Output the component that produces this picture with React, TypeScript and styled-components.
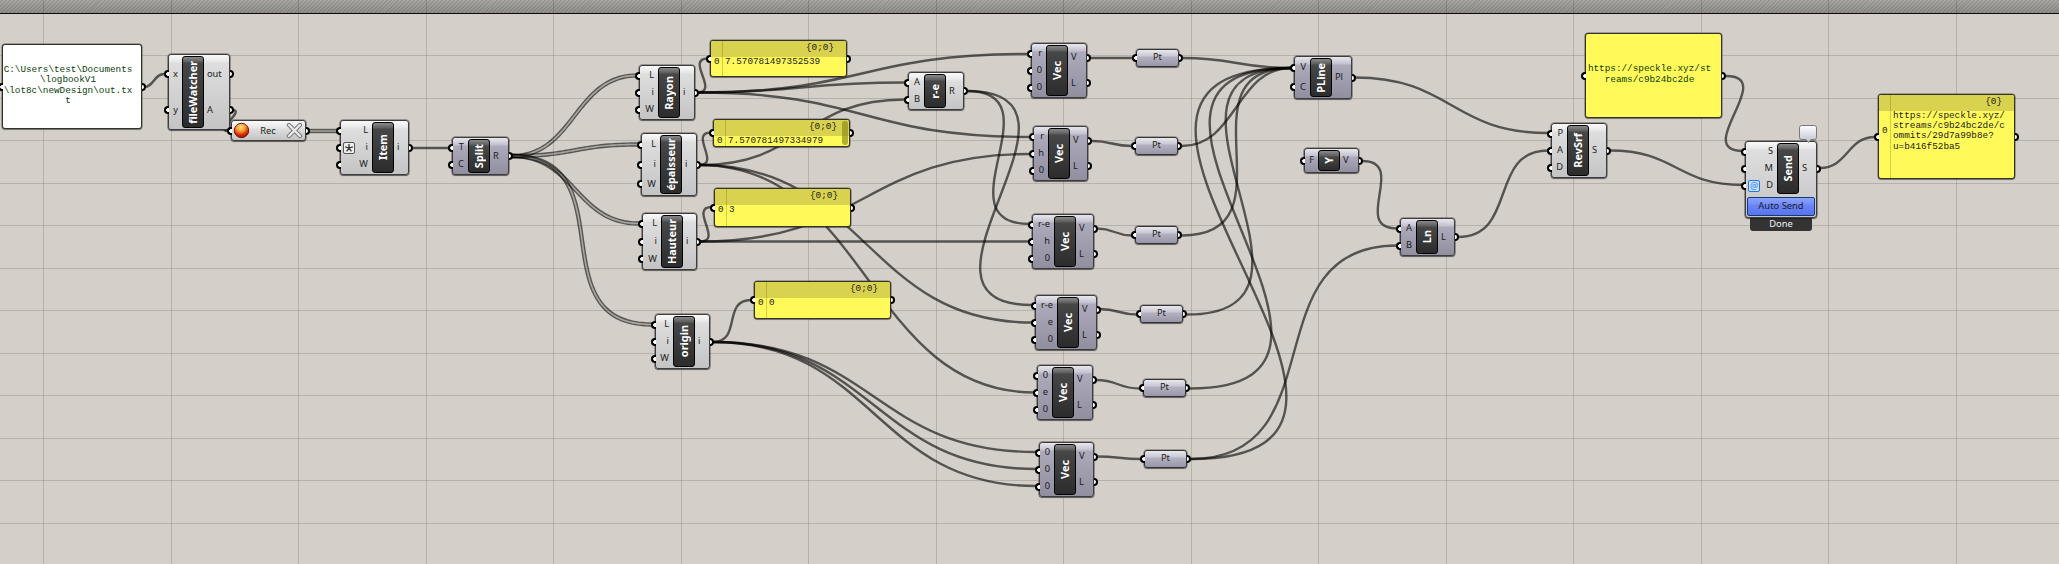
import React from "react";
import styled, { createGlobalStyle, css } from "styled-components";

const GlobalStyle = createGlobalStyle`
  * { box-sizing: border-box; }
  html, body { margin: 0; padding: 0; overflow: hidden; }
`;

const WIDTH = 2059;
const HEIGHT = 564;

const Window = styled.div`
  position: relative;
  display: flex;
  flex-direction: column;
  width: ${WIDTH}px;
  height: ${HEIGHT}px;
  overflow: hidden;
  background: #d4cfc8;
  font-family: "Noto Sans", "Open Sans", sans-serif;
  color: #1c1c1c;
`;

const TopBar = styled.div`
  flex: none;
  height: 14px;
  border-bottom: 1px solid #0a0a0a;
  background:
    repeating-linear-gradient(135deg, rgba(255, 255, 255, 0.06) 0 1.4px, rgba(0, 0, 0, 0.05) 1.4px 2.8px),
    linear-gradient(#a3a29d, #898884);
`;

const Canvas = styled.svg`
  position: absolute;
  inset: 0;
`;

type Box = { $x: number; $y: number; $w: number; $h: number };

const placed = css<Box>`
  position: absolute;
  left: ${(p) => p.$x}px;
  top: ${(p) => p.$y}px;
  width: ${(p) => p.$w}px;
  height: ${(p) => p.$h}px;
`;

type Tone = "light" | "purple";

const tones: Record<Tone, string> = {
  light: "linear-gradient(#fafafa 0, #e6e6e6 7px, #dedede 8px, #c4c4c4 100%)",
  purple: "linear-gradient(#e9e8ee 0, #c3c1ce 7px, #adabbb 8px, #908e9f 100%)",
};

const NodeFrame = styled.div<Box & { $tone: Tone }>`
  ${placed}
  display: flex;
  flex-direction: column;
  border: 1px solid #3d3d3f;
  border-radius: 3px;
  background: ${(p) => tones[p.$tone]};
  box-shadow: 0 0 0 0.5px rgba(40, 40, 40, 0.7), 0 1px 1px rgba(0, 0, 0, 0.4);
`;

const NodeBody = styled.div<{ $left: number }>`
  flex: 1;
  min-height: 0;
  display: grid;
  grid-template-columns: ${(p) => p.$left - 1}px 22px 1fr;
  padding: 1px 0;
`;

const Ports = styled.div`
  display: flex;
  flex-direction: column;
`;

const Socket = styled.i<{ $side: "left" | "right" }>`
  position: absolute;
  ${(p) => p.$side}: -5px;
  top: calc(50% - 4px);
  width: 4.5px;
  height: 8px;
  border: 2px solid #000;
  background: #fff;
  ${(p) =>
    p.$side === "left"
      ? "border-right: 0; border-radius: 4px 0 0 4px;"
      : "border-left: 0; border-radius: 0 4px 4px 0;"}
`;

const PortRow = styled.div<{ $side: "left" | "right" }>`
  position: relative;
  flex: 1;
  display: flex;
  align-items: center;
  justify-content: ${(p) => (p.$side === "left" ? "flex-end" : "flex-start")};
  padding: ${(p) => (p.$side === "left" ? "0 4px 1px 0" : "0 0 1px 3px")};
  font-size: 9.3px;
  line-height: 10px;
  white-space: nowrap;
`;

const NamePlate = styled.div`
  display: flex;
  align-items: center;
  justify-content: center;
  overflow: hidden;
  border: 1px solid #000;
  border-radius: 3px;
  background: linear-gradient(#8a8a8a 0, #5c5c5c 5px, #474747 6px, #2c2c2c 100%);
  color: #fff;
`;

const NameText = styled.span`
  writing-mode: vertical-rl;
  transform: rotate(180deg);
  font-size: 10.9px;
  font-weight: 700;
  line-height: 20px;
  white-space: nowrap;
`;

const Param = styled.div<Box>`
  ${placed}
  display: flex;
  align-items: center;
  justify-content: center;
  border: 1px solid #333336;
  border-radius: 3px;
  background: linear-gradient(#e9e8ee 0, #c9c7d3 6px, #b4b2c1 7px, #9896a7 100%);
  box-shadow: 0 0 0 0.5px rgba(40, 40, 40, 0.6), 0 1px 1px rgba(0, 0, 0, 0.4);
  font-size: 9.3px;
  line-height: 10px;
  padding-bottom: 2px;
`;

const Recorder = styled.div<Box>`
  ${placed}
  display: flex;
  align-items: center;
  justify-content: space-between;
  padding: 0 2px 0 1px;
  border: 1px solid #3d3d3f;
  border-radius: 3px;
  background: ${tones.light};
  box-shadow: 0 0 0 0.5px rgba(40, 40, 40, 0.7), 0 1px 1px rgba(0, 0, 0, 0.4);
  font-size: 9.3px;
`;

const Modifier = styled.span<{ $blue?: boolean }>`
  position: absolute;
  left: 2px;
  top: calc(50% - 6px);
  width: 12px;
  height: 12px;
  border: 1px solid ${(p) => (p.$blue ? "#1b78f0" : "#555")};
  border-radius: 2px;
  background: ${(p) => (p.$blue ? "#cfe0fa" : "#eee")};
  svg { display: block; }
  color: ${(p) => (p.$blue ? "#2a7ff0" : "#333")};
  font-size: 9px;
  line-height: 9px;
  text-align: center;
`;

const AutoButton = styled.div`
  flex: none;
  height: 19px;
  margin: 2px 1px 1px;
  border: 1px solid #123c78;
  border-radius: 2px;
  background: linear-gradient(#8aa2fb 0, #7690fa 6px, #6a85f8 7px, #5973f0 100%);
  text-align: center;
  font-size: 9.4px;
  line-height: 16px;
`;

const StatusTab = styled.div<Box>`
  ${placed}
  border-radius: 0 0 3px 3px;
  background: #333;
  color: #f2f2f2;
  text-align: center;
  font-size: 9.4px;
  line-height: 13px;
`;

const PanelFrame = styled.div<Box & { $white?: boolean }>`
  ${placed}
  display: flex;
  flex-direction: column;
  border: 1px solid #33332a;
  border-radius: 3px;
  background: ${(p) => (p.$white ? "#fff" : "#fffa5a")};
  box-shadow: 0 0 0 0.5px rgba(40, 40, 30, 0.6), 0 1px 1px rgba(0, 0, 0, 0.3);
  font-family: "Liberation Mono", "DejaVu Sans Mono", monospace;
  font-size: 9.34px;
  line-height: 10.2px;
`;

const PanelHeader = styled.div`
  flex: none;
  height: 16px;
  padding: 2px 12px 0 0;
  background: #d8d24e;
  border-radius: 2px 2px 0 0;
  text-align: right;
`;

const PanelRow = styled.div`
  display: grid;
  grid-template-columns: 12px 1fr;
  align-items: center;
  white-space: pre;
  span:first-child { padding-left: 3px; }
  span:last-child { padding-left: 2px; }
`;

const PanelRule = styled.i`
  position: absolute;
  left: 11px;
  top: 0;
  bottom: 0;
  width: 1px;
  background: rgba(100, 95, 0, 0.28);
`;

const PanelScroll = styled.i`
  position: absolute;
  right: 1px;
  top: 1px;
  width: 6px;
  height: 24px;
  border-radius: 3px;
  background: rgba(140, 135, 20, 0.65);
`;

const PanelNote = styled.div`
  flex: 1;
  display: flex;
  align-items: center;
  justify-content: center;
  padding: 0 8px 2px 0;
  white-space: pre;
  text-align: center;
  color: #0a3d0a;
`;

type NodeSpec = {
  x: number; y: number; w: number; h: number; left: number;
  tone: Tone; name: string; ins: string[]; outs: string[]; star?: number;
};

const nodes: NodeSpec[] = [
  { x: 168, y: 54, w: 62, h: 76, left: 14, tone: "light", name: "fileWatcher", ins: ["x", "y"], outs: ["out", "A"] },
  { x: 340, y: 120, w: 69, h: 55, left: 32, tone: "light", name: "Item", ins: ["L", "i", "W"], outs: ["i"], star: 1 },
  { x: 452, y: 137, w: 57, h: 38, left: 16, tone: "purple", name: "Split", ins: ["T", "C"], outs: ["R"] },
  { x: 639, y: 65, w: 56, h: 55, left: 19, tone: "light", name: "Rayon", ins: ["L", "i", "W"], outs: ["i"] },
  { x: 641, y: 133, w: 56, h: 63, left: 19, tone: "light", name: "épaisseur", ins: ["L", "i", "W"], outs: ["i"] },
  { x: 642, y: 213, w: 55, h: 57, left: 19, tone: "light", name: "Hauteur", ins: ["L", "i", "W"], outs: ["i"] },
  { x: 655, y: 314, w: 55, h: 55, left: 18, tone: "light", name: "origin", ins: ["L", "i", "W"], outs: ["i"] },
  { x: 908, y: 72, w: 56, h: 38, left: 16, tone: "light", name: "r-e", ins: ["A", "B"], outs: ["R"] },
  { x: 1031, y: 43, w: 56, h: 55, left: 15, tone: "purple", name: "Vec", ins: ["r", "0", "0"], outs: ["V", "L"] },
  { x: 1033, y: 126, w: 55, h: 55, left: 15, tone: "purple", name: "Vec", ins: ["r", "h", "0"], outs: ["V", "L"] },
  { x: 1032, y: 214, w: 62, h: 55, left: 22, tone: "purple", name: "Vec", ins: ["r-e", "h", "0"], outs: ["V", "L"] },
  { x: 1035, y: 295, w: 62, h: 55, left: 22, tone: "purple", name: "Vec", ins: ["r-e", "e", "0"], outs: ["V", "L"] },
  { x: 1037, y: 365, w: 56, h: 55, left: 15, tone: "purple", name: "Vec", ins: ["0", "e", "0"], outs: ["V", "L"] },
  { x: 1039, y: 442, w: 55, h: 55, left: 15, tone: "purple", name: "Vec", ins: ["0", "0", "0"], outs: ["V", "L"] },
  { x: 1294, y: 56, w: 58, h: 43, left: 16, tone: "purple", name: "PLine", ins: ["V", "C"], outs: ["Pl"] },
  { x: 1304, y: 148, w: 55, h: 25, left: 14, tone: "purple", name: "Y", ins: ["F"], outs: ["V"] },
  { x: 1400, y: 218, w: 55, h: 38, left: 16, tone: "purple", name: "Ln", ins: ["A", "B"], outs: ["L"] },
  { x: 1551, y: 123, w: 56, h: 55, left: 16, tone: "light", name: "RevSrf", ins: ["P", "A", "D"], outs: ["S"] },
];

const sendNode: NodeSpec = {
  x: 1745, y: 141, w: 72, h: 77, left: 32, tone: "light", name: "Send", ins: ["S", "M", "D"], outs: ["S"],
};

const params = [
  [1136, 49], [1135, 137], [1135, 226], [1140, 305], [1143, 379], [1144, 450],
];

type WireSpec = [number, number, number, number];

const wires: WireSpec[] = [
  [144, 87, 164, 74],
  [232, 110, 228, 131],
  [412, 148, 449, 148],
  [697, 92.5, 708, 58.5],
  [699, 165, 711, 132.5],
  [700, 241.5, 712, 207],
  [713, 342, 751, 300],
  [698, 92.5, 1028, 54],
  [698, 92.5, 905, 82.5],
  [698, 92.5, 1030, 137],
  [700, 165, 905, 99.5],
  [700, 165, 1032, 322.5],
  [700, 165, 1035, 392.5],
  [700, 241.5, 1030, 154],
  [700, 241.5, 1029, 241.5],
  [713, 342, 1036, 452],
  [713, 342, 1036, 469],
  [713, 342, 1036, 486],
  [967, 91, 1030, 224],
  [967, 91, 1032, 305],
  [1090, 58, 1133, 58],
  [1092, 141, 1132, 146],
  [1097, 228.5, 1132, 235.5],
  [1100, 309, 1137, 314.5],
  [1096, 380, 1140, 388.5],
  [1097, 456.5, 1141, 459],
  [1182, 58, 1291, 68],
  [1182, 146, 1291, 68],
  [1182, 235.5, 1291, 68],
  [1187, 314.5, 1291, 68],
  [1190, 388.5, 1291, 68],
  [1191, 459, 1291, 68],
  [1191, 459, 1397, 245.5],
  [1355, 77.5, 1548, 133],
  [1362, 161, 1397, 228.5],
  [1458, 237, 1548, 150.5],
  [1610, 150.5, 1743, 185],
  [1726, 76, 1743, 151],
  [1820, 168, 1875, 137],
];

const treeWires: WireSpec[] = [
  [309, 131, 337, 131],
  [512, 156, 637, 75.5],
  [512, 156, 638, 144.5],
  [512, 156, 639, 223.5],
  [512, 156, 652, 324.5],
];

function reach([x1, y1, x2, y2]: WireSpec) {
  const dx = Math.abs(x2 - x1);
  const dy = Math.abs(y2 - y1);
  return Math.max(dx * 0.5, dy * (dy > 250 ? 0.725 : 0.69));
}

function wirePath(w: WireSpec) {
  const k = reach(w);
  const [x1, y1, x2, y2] = w;
  return `M${x1} ${y1}C${x1 + k} ${y1} ${x2 - k} ${y2} ${x2} ${y2}`;
}

/* Follows the wire at a constant distance from its centre line. */
function parallelPath(w: WireSpec, offset: number) {
  const [x1, y1, x2, y2] = w;
  const k = reach(w);
  const xs = [x1, x1 + k, x2 - k, x2];
  const ys = [y1, y1, y2, y2];
  const points: string[] = [];
  for (let i = 0; i <= 48; i++) {
    const t = i / 48;
    const u = 1 - t;
    const at = (p: number[]) => u * u * u * p[0] + 3 * u * u * t * p[1] + 3 * u * t * t * p[2] + t * t * t * p[3];
    const slope = (p: number[]) => u * u * (p[1] - p[0]) + 2 * u * t * (p[2] - p[1]) + t * t * (p[3] - p[2]);
    const sx = slope(xs);
    const sy = slope(ys);
    const len = Math.hypot(sx, sy) || 1;
    points.push(`${(at(xs) - (sy / len) * offset).toFixed(2)} ${(at(ys) + (sx / len) * offset).toFixed(2)}`);
  }
  return "M" + points.join("L");
}

const columns = Array.from({ length: 16 }, (_, i) => Math.floor(43.5 + 127.5 * i) + 0.5);
const rows = Array.from({ length: 12 }, (_, i) => Math.floor(55.5 + 42.5 * i) + 0.5);

function Body({ spec }: { spec: NodeSpec }) {
  return (
    <NodeBody $left={spec.left}>
      <Ports>
        {spec.ins.map((label, i) => (
          <PortRow key={i} $side="left">
            <Socket $side="left" />
            {spec.star === i && (
              <Modifier>
                <svg width="10" height="10" viewBox="0 0 10 10" stroke="#333" strokeWidth="1.3">
                  <path d="M5 1V5M5 5L1.2 3.8M5 5L8.8 3.8M5 5L2.6 8.4M5 5L7.4 8.4" />
                </svg>
              </Modifier>
            )}
            {spec.name === "Send" && i === 2 && <Modifier $blue>@</Modifier>}
            {label}
          </PortRow>
        ))}
      </Ports>
      <NamePlate>
        <NameText>{spec.name}</NameText>
      </NamePlate>
      <Ports>
        {spec.outs.map((label, i) => (
          <PortRow key={i} $side="right">
            {label}
            <Socket $side="right" />
          </PortRow>
        ))}
      </Ports>
    </NodeBody>
  );
}

function Node({ spec, children }: { spec: NodeSpec; children?: React.ReactNode }) {
  return (
    <NodeFrame $x={spec.x} $y={spec.y} $w={spec.w} $h={spec.h} $tone={spec.tone}>
      <Body spec={spec} />
      {children}
    </NodeFrame>
  );
}

type PanelProps = {
  x: number; y: number; h: number; w?: number; path?: string; value?: string; note?: string;
  white?: boolean; scroll?: boolean;
};

function Panel({ x, y, h, w = 137, path, value, note, white, scroll }: PanelProps) {
  return (
    <PanelFrame $x={x} $y={y} $w={w} $h={h} $white={white}>
      <Socket $side="left" />
      <Socket $side="right" />
      {path && <PanelHeader>{path}</PanelHeader>}
      {value && (
        <PanelRow>
          <span>0</span>
          <span>{value}</span>
        </PanelRow>
      )}
      {path && <PanelRule />}
      {scroll && <PanelScroll />}
      {note && <PanelNote>{note}</PanelNote>}
    </PanelFrame>
  );
}

export default function App() {
  return (
    <Window>
      <GlobalStyle />
      <TopBar />
      <Canvas width={WIDTH} height={HEIGHT} fill="none">
        <g stroke="#000" strokeOpacity="0.14">
          {columns.map((x) => <path key={x} d={`M${x} 0V${HEIGHT}`} />)}
          {rows.map((y) => <path key={y} d={`M0 ${y}H${WIDTH}`} />)}
        </g>
        <g stroke="#000" strokeOpacity="0.6" strokeWidth="2.4">
          {wires.map((w, i) => <path key={i} d={wirePath(w)} />)}
        </g>
        {treeWires.map((w, i) => (
          <g key={i} stroke="#000">
            <path d={wirePath(w)} strokeOpacity="0.2" strokeWidth="2" />
            <path d={parallelPath(w, 1.5)} strokeOpacity="0.58" strokeWidth="1.4" />
            <path d={parallelPath(w, -1.5)} strokeOpacity="0.58" strokeWidth="1.4" />
          </g>
        ))}
      </Canvas>

      <Panel x={2} y={44} w={140} h={85} white note={"C:\\Users\\test\\Documents\n\\logbookV1\n\\lot8c\\newDesign\\out.tx\nt"} />
      <Panel x={710} y={40} h={37} path="{0;0}" value="7.570781497352539" />
      <Panel x={713} y={119} h={28} path="{0;0}" value="7.570781497334979" scroll />
      <Panel x={714} y={188} h={39} path="{0;0}" value="3" />
      <Panel x={754} y={281} h={38} path="{0;0}" value="0" />
      <Panel x={1585} y={33} h={85} note={"https://speckle.xyz/st\nreams/c9b24bc2de"} />
      <Panel
        x={1878} y={94} h={85} path="{0}"
        value={"https://speckle.xyz/\nstreams/c9b24bc2de/c\nommits/29d7a99b8e?\nu=b416f52ba5"}
      />

      {nodes.map((spec, i) => <Node key={i} spec={spec} />)}

      <Recorder $x={231} $y={120} $w={75} $h={21}>
        <Socket $side="left" />
        <svg width="17" height="17" viewBox="0 0 17 17">
          <defs>
            <radialGradient id="orb" cx="0.45" cy="0.25" r="0.8">
              <stop offset="0" stopColor="#ffe08a" />
              <stop offset="0.4" stopColor="#f29a2e" />
              <stop offset="0.7" stopColor="#cf2a0c" />
              <stop offset="1" stopColor="#8c0a00" />
            </radialGradient>
          </defs>
          <circle cx="8.5" cy="8.5" r="7.2" fill="url(#orb)" stroke="#7d1408" />
        </svg>
        Rec
        <svg width="17" height="17" viewBox="0 0 17 17" strokeLinecap="round">
          <path d="M3 3L14 14M14 3L3 14" stroke="#7a7a7a" strokeWidth="4.4" />
          <path d="M3 3L14 14M14 3L3 14" stroke="#e9e9e9" strokeWidth="2.4" />
        </svg>
        <Socket $side="right" />
      </Recorder>

      {params.map(([x, y]) => (
        <Param key={y} $x={x} $y={y} $w={43} $h={18}>
          <Socket $side="left" />
          Pt
          <Socket $side="right" />
        </Param>
      ))}

      <StatusTab $x={1750} $y={217} $w={62} $h={14}>Done</StatusTab>
      <Node spec={sendNode}>
        <AutoButton>Auto Send</AutoButton>
      </Node>
      <Canvas width={WIDTH} height={HEIGHT} fill="none">
        <defs>
          <linearGradient id="balloon" x1="0" y1="0" x2="0" y2="1">
            <stop offset="0" stopColor="#fff" />
            <stop offset="1" stopColor="#bcbfcc" />
          </linearGradient>
        </defs>
        <path
          d="M1802 125.5H1814.5a2 2 0 0 1 2 2V137.5a2 2 0 0 1 -2 2H1811L1808.5 142.5L1806 139.5H1801.5a2 2 0 0 1 -2 -2V127.5a2 2 0 0 1 2 -2Z"
          fill="url(#balloon)" stroke="#77777d"
        />
      </Canvas>
    </Window>
  );
}
